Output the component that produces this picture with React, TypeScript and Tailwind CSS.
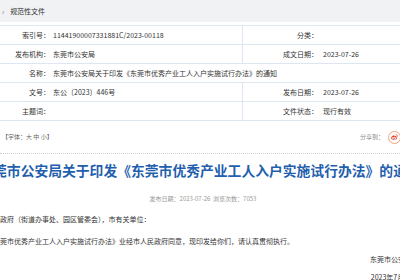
import { FaWeibo } from "react-icons/fa";

const font = "font-['Noto_Sans_CJK_SC','Noto_Sans',sans-serif]";

type Cell = { label: string; value: string };

const rows: { left: Cell; right?: Cell }[] = [
  { left: { label: "索引号：", value: "11441900007331881C/2023-00118" }, right: { label: "分类：", value: "" } },
  { left: { label: "发布机构：", value: "东莞市公安局" }, right: { label: "成文日期：", value: "2023-07-26" } },
  { left: { label: "名称：", value: "东莞市公安局关于印发《东莞市优秀产业工人入户实施试行办法》的通知" } },
  { left: { label: "文号：", value: "东公〔2023〕446号" }, right: { label: "发布日期：", value: "2023-07-26" } },
  { left: { label: "主题词：", value: "" }, right: { label: "文件状态：", value: "现行有效" } },
];

function InfoTable() {
  return (
    <div className="mt-[3px] border-t border-[#dde7f1]">
      {rows.map((row) => (
        <div
          key={row.left.label}
          className="grid h-[19px] grid-cols-[50px_193px_75px_1fr] items-center border-b border-[#dde7f1]"
        >
          <div className="text-right">{row.left.label}</div>
          {row.right ? (
            <>
              <div className="flex h-full items-center border-r border-[#dde7f1] pl-[3px]">
                {row.left.value}
              </div>
              <div className="text-right">{row.right.label}</div>
              <div className="pl-[5px]">{row.right.value}</div>
            </>
          ) : (
            <div className="col-span-3 pl-[3px]">{row.left.value}</div>
          )}
        </div>
      ))}
    </div>
  );
}

export default function App() {
  return (
    <div className={`h-[280px] w-[400px] overflow-hidden bg-white text-[7px] leading-none text-[#333] ${font}`}>
      <div className="flex h-[22px] items-center gap-[6px] bg-[#f1f2f4] pl-[2px]">
        <span className="text-[#666]">›</span>
        <span>规范性文件</span>
      </div>

      <InfoTable />

      <div className="mt-[9px] flex h-[14px] w-[401px] items-center justify-between pl-[2px] text-[6px] text-[#666]">
        <span>【字体：大 中 小】</span>
        <div className="flex items-center gap-[4px]">
          <span className="text-[#888]">分享到：</span>
          <span className="flex h-[13px] w-[13px] items-center justify-center rounded-full border border-[#f3a27f] bg-white">
            <FaWeibo className="h-[7px] w-[7px] text-[#e2452b]" />
          </span>
        </div>
      </div>

      <div className="mt-[9px] border-t border-dotted border-[#cfcfcf]" />

      <div className="mt-[8px] flex h-[18px] items-center justify-center whitespace-nowrap text-[13.8px] font-bold text-[#1f5fad]">
        东莞市公安局关于印发《东莞市优秀产业工人入户实施试行办法》的通知
      </div>

      <div className="mt-[14px] flex h-[10px] items-center justify-center pl-[6px] text-[6px] text-[#999]">
        发布日期：2023-07-26&nbsp;&nbsp;浏览次数：7053
      </div>

      <div className="-ml-[28px] mt-[6px] w-[440px] whitespace-nowrap leading-[18px]">
        <p>各镇人民政府（街道办事处、园区管委会），市有关单位：</p>
        <p className="mt-[4px] indent-[14px]">
          《东莞市优秀产业工人入户实施试行办法》业经市人民政府同意，现印发给你们，请认真贯彻执行。
        </p>
        <p className="text-right">东莞市公安局</p>
        <p className="-mr-[7px] text-right">2023年7月26日</p>
      </div>
    </div>
  );
}
